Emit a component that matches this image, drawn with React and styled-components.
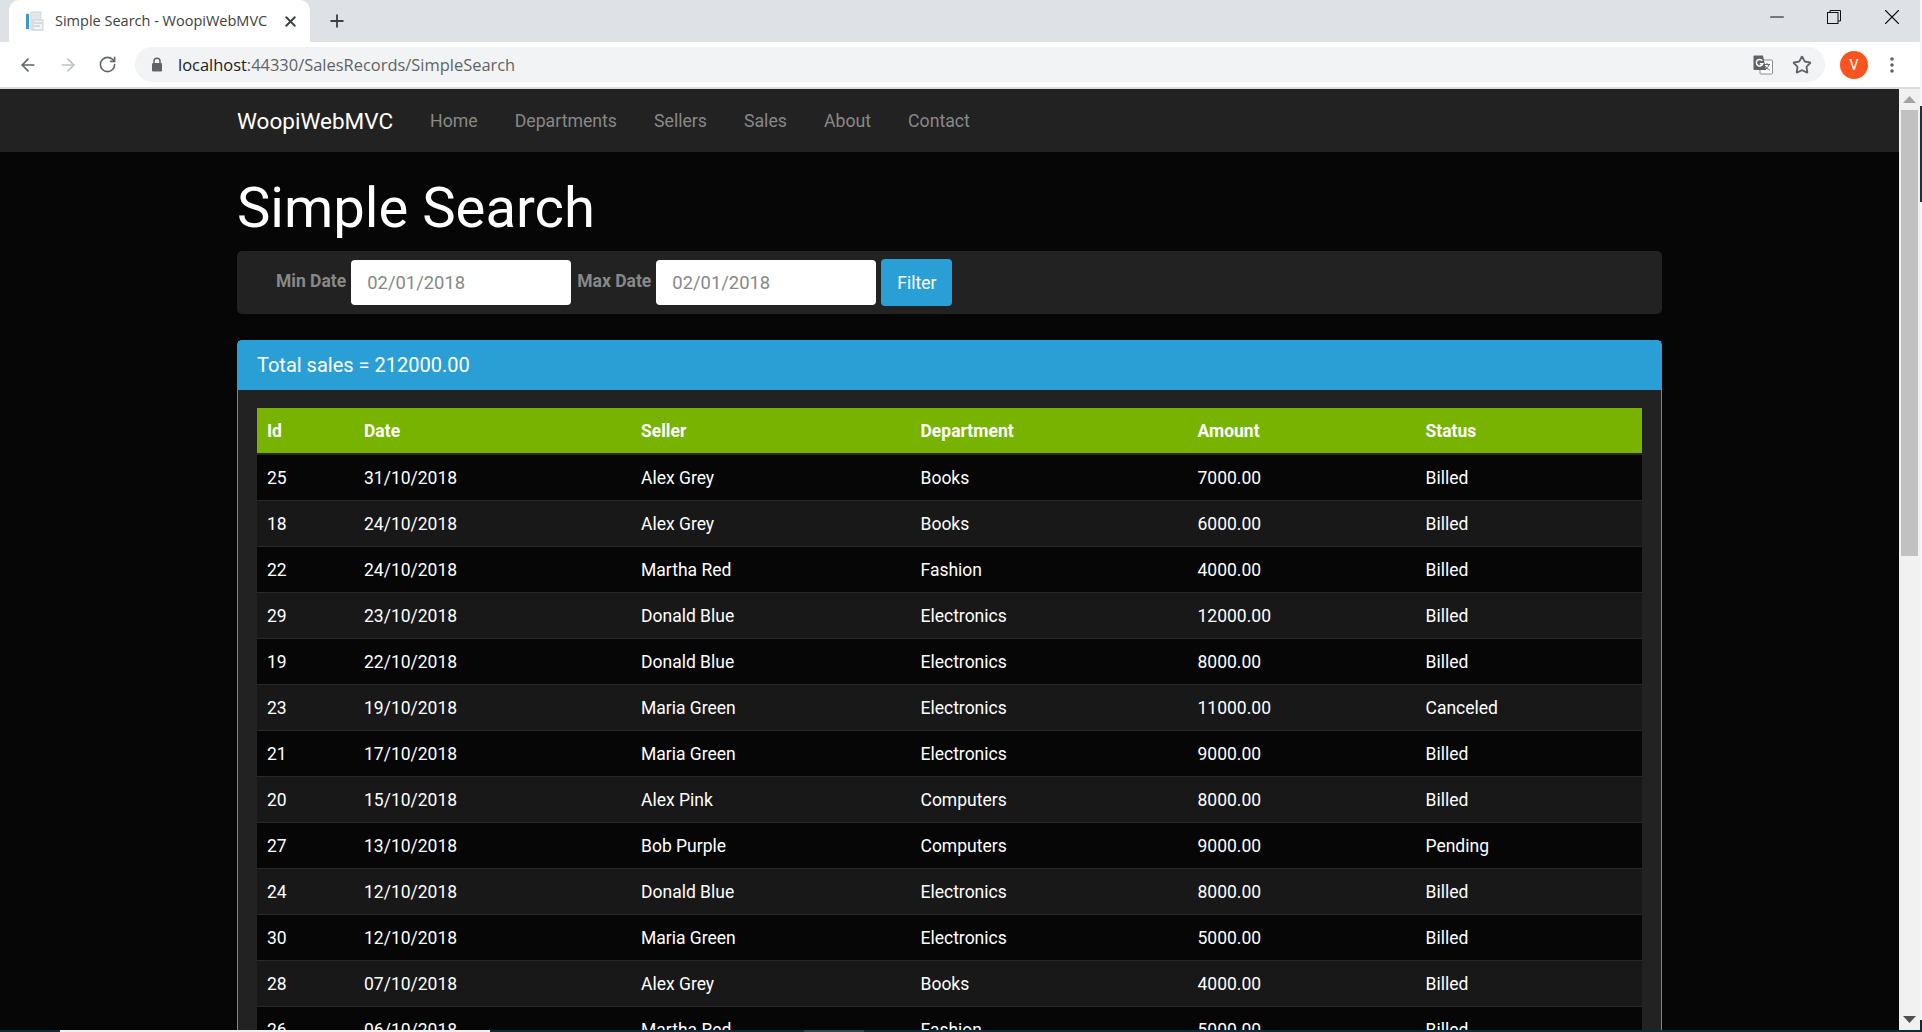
import React from "react";
import styled, { createGlobalStyle } from "styled-components";
import { ArrowLeft, ArrowRight, RotateCw, Star, Plus, X, Minus } from "lucide-react";

const Global = createGlobalStyle`
  html, body { margin: 0; padding: 0; background: #060606; overflow: hidden; }
  * { box-sizing: border-box; }
`;

const Screen = styled.div`
  width: 1922px; height: 1032px; display: flex; flex-direction: column; overflow: hidden;
  font-family: Roboto, "Liberation Sans", sans-serif;
`;
const WindowRow = styled.div`display: flex; height: 1030px;`;
const Browser = styled.div`width: 1920px; display: flex; flex-direction: column;`;
const EdgeStrip = styled.div`
  width: 2px; display: flex; flex-direction: column; background: #f4f5f6;
`;
const EdgeSeg = styled.div`
  height: ${p => p.$h}px; background: ${p => p.$c};
`;
const Taskbar = styled.div`height: 2px; display: flex; background: #0b2a3a;`;
const TaskSeg = styled.div`
  width: ${p => p.$w}px; background: ${p => p.$c};
`;

const TabStrip = styled.div`
  height: 42px; background: #dee1e6; display: flex; align-items: flex-end; padding-left: 9px;
`;
const Tab = styled.div`
  width: 301px; height: 42px; background: #fff; border-radius: 10px 10px 0 0;
  display: flex; align-items: center; padding-left: 16px; position: relative;
  font-family: "Open Sans", "Noto Sans", sans-serif; font-size: 14.5px; color: #3c4043;
`;
const TabTitle = styled.span`margin-left: 10px; width: 227px; white-space: nowrap; position: relative; top: -1px;`;
const TabClose = styled.span`display: flex; color: #3c4043;`;
const NewTab = styled.span`display: flex; margin-left: 17px; height: 42px; align-items: center; color: #3c4043;`;
const Spring = styled.div`flex: 1;`;
const WinButton = styled.span`
  width: ${p => p.$w}px; height: 34px; display: flex; align-items: center; justify-content: center;
  align-self: flex-start; color: #111;
`;

const Toolbar = styled.div`
  height: 47px; background: #fff; border-bottom: 2px solid #dadce0; display: flex; align-items: center;
  padding-left: 18px;
`;
const NavIcon = styled.span`
  display: flex; width: ${p => p.$w}px; color: ${p => p.$c};
`;
const AddressBar = styled.div`
  width: 1690px; height: 35px; margin-left: 1px; background: #f1f3f4; border-radius: 18px;
  display: flex; align-items: center; padding-left: 16px;
  font-family: "Open Sans", "Noto Sans", sans-serif; font-size: 16.45px; color: #5f6368;
`;
const LockWrap = styled.span`display: flex; width: 27px;`;
const Host = styled.span`color: #202124;`;
const Avatar = styled.span`
  width: 28px; height: 28px; border-radius: 50%; background: #fb541e; color: #fff; margin-left: 15px;
  display: flex; align-items: center; justify-content: center; font-size: 14px;
`;
const AddrIcons = styled.span`
  margin-left: auto; display: flex; align-items: center; gap: 19px; padding-right: 13px; color: #5f6368;
`;
const Kebab = styled.span`display: flex; margin-left: 22px;`;

const Viewport = styled.div`flex: 1; display: flex; min-height: 0;`;
const Page = styled.div`
  flex: 1; min-width: 0; background: #060606; overflow: hidden; color: #fff;
`;
const Scrollbar = styled.div`
  width: 21px; background: #f1f1f1; display: flex; flex-direction: column; align-items: center;
`;
const ScrollArrow = styled.div`
  height: 21px; width: 100%; display: flex; align-items: center; justify-content: center;
`;
const Thumb = styled.div`width: 17px; height: 446px; background: #c1c1c1;`;
const ScrollTrack = styled.div`flex: 1;`;

const Navbar = styled.nav`height: 63px; background: #222; display: flex; justify-content: center;`;
const Container = styled.div`width: 1425px;`;
const NavInner = styled(Container)`display: flex; align-items: center;`;
const Brand = styled.span`font-size: 22.5px; color: #fff; margin-right: 37px;`;
const NavLink = styled.span`font-size: 17.7px; color: #888; margin-right: 37px;`;

const Main = styled.main`display: flex; justify-content: center;`;
const Title = styled.h1`
  font-weight: 400; font-size: 56.2px; line-height: 62px; margin: 0; padding-top: 25px; height: 99px; color: #fff;
`;
const FilterBar = styled.form`
  height: 63px; margin: 0 0 26px; background: #222; border-radius: 5px; display: flex; align-items: center;
  padding-left: 39px;
`;
const FilterLabel = styled.label`
  font-weight: 700; font-size: 17.5px; color: #888; margin-right: 5px; margin-left: ${p => p.$ml || 0}px;
  position: relative; top: -2px;
`;
const DateInput = styled.input`
  width: 220px; height: 45px; border: 0; border-radius: 4px; background: #fff; color: #888;
  font: 400 18.4px Roboto, sans-serif; padding: 0 16px;
  &::placeholder { color: #888; opacity: 1; }
`;
const FilterButton = styled.button`
  width: 71px; height: 47px; margin-left: 5px; border: 0; border-radius: 4px; background: #2a9fd6; color: #fff;
  font: 400 17.5px Roboto, sans-serif;
`;
const Panel = styled.section`
  border: 1px solid #2a9fd6; border-bottom: 0; border-radius: 5px 5px 0 0; background: #222;
`;
const PanelHeading = styled.div`
  height: 49px; margin: 0 0 0; background: #2a9fd6; color: #fff; font-size: 20px; display: flex; align-items: center;
  padding: 0 0 1px 19px;
`;
const PanelBody = styled.div`padding: 18px 19px 0;`;
const Table = styled.table`
  width: 1385px; table-layout: fixed; border-collapse: separate; border-spacing: 0; font-size: 17.5px; color: #fff;
`;
const Col = styled.col`width: ${p => p.$w}px;`;
const HeadRow = styled.tr`height: 47px;`;
const Th = styled.th`
  text-align: left; font-weight: 700; padding: 0 10px; background: #77b300; border-bottom: 2px solid #282828;
`;
const Row = styled.tr`
  height: 46px; background: ${p => (p.$odd ? "#060606" : "#181818")};
`;
const Td = styled.td`padding: 1px 10px 0; border-bottom: 1px solid #282828;`;

const cols = [97, 277, 279.5, 277, 228, 226.5];
const heads = ["Id", "Date", "Seller", "Department", "Amount", "Status"];
const rows = [
  ["25", "31/10/2018", "Alex Grey", "Books", "7000.00", "Billed"],
  ["18", "24/10/2018", "Alex Grey", "Books", "6000.00", "Billed"],
  ["22", "24/10/2018", "Martha Red", "Fashion", "4000.00", "Billed"],
  ["29", "23/10/2018", "Donald Blue", "Electronics", "12000.00", "Billed"],
  ["19", "22/10/2018", "Donald Blue", "Electronics", "8000.00", "Billed"],
  ["23", "19/10/2018", "Maria Green", "Electronics", "11000.00", "Canceled"],
  ["21", "17/10/2018", "Maria Green", "Electronics", "9000.00", "Billed"],
  ["20", "15/10/2018", "Alex Pink", "Computers", "8000.00", "Billed"],
  ["27", "13/10/2018", "Bob Purple", "Computers", "9000.00", "Pending"],
  ["24", "12/10/2018", "Donald Blue", "Electronics", "8000.00", "Billed"],
  ["30", "12/10/2018", "Maria Green", "Electronics", "5000.00", "Billed"],
  ["28", "07/10/2018", "Alex Grey", "Books", "4000.00", "Billed"],
  ["26", "06/10/2018", "Martha Red", "Fashion", "5000.00", "Billed"],
];

const Favicon = () => (
  <svg width="20" height="20" viewBox="0 0 20 20">
    <rect x="1" y="2" width="11" height="17" fill="#eef1f5" />
    <rect x="1" y="3" width="3" height="15" fill="#3d96d6" />
    <rect x="6" y="1" width="10" height="18" fill="#e3e7ec" stroke="#d3d8de" />
    <rect x="8" y="9" width="10" height="10" fill="#f2f4f7" stroke="#c9ced5" />
    <path d="M9 12h8M9 15h6" stroke="#b9bfc7" />
  </svg>
);
const Lock = () => (
  <svg width="12" height="15" viewBox="0 0 12 15">
    <path d="M3 6V4.2a3 3 0 0 1 6 0V6" fill="none" stroke="#5f6368" strokeWidth="1.5" />
    <rect x="1" y="6" width="10" height="8.5" rx="1.2" fill="#5f6368" />
  </svg>
);
const Translate = () => (
  <svg width="20" height="20" viewBox="0 0 20 20">
    <rect x="7" y="5" width="12.5" height="14" rx="1" fill="#fff" stroke="#8a8d91" />
    <path d="M11 9.5h6M14 8v1.5M16 9.5c-.6 2.4-2.4 4.4-4.6 5.4M12.4 11c.8 1.8 2.4 3.2 4.4 4" fill="none" stroke="#6a6d71" strokeWidth="1" />
    <path d="M1.5 0.5H10L13 15H1.5a1 1 0 0 1-1-1V1.5a1 1 0 0 1 1-1z" fill="#5f6368" />
    <path d="M9.3 5.7a3.3 3.3 0 1 0 .5 3H6.8" fill="none" stroke="#fff" strokeWidth="1.5" />
  </svg>
);
const Restore = () => (
  <svg width="14" height="14" viewBox="0 0 14 14" fill="none" stroke="#111" strokeWidth="1">
    <rect x="0.5" y="2.5" width="10.5" height="11" />
    <path d="M3 2.5V.5h10.5v10.5H11" />
  </svg>
);
const Dots = () => (
  <svg width="4" height="16" viewBox="0 0 4 16" fill="#5f6368">
    <circle cx="2" cy="2" r="1.8" /><circle cx="2" cy="8" r="1.8" /><circle cx="2" cy="14" r="1.8" />
  </svg>
);
const Tri = ({ up, c }) => (
  <svg width="13" height="7" viewBox="0 0 13 7">
    <path d={up ? "M6.5 0L13 7H0z" : "M0 0h13L6.5 7z"} fill={c} />
  </svg>
);

export default function App() {
  return (
    <Screen>
      <Global />
      <WindowRow>
        <Browser>
          <TabStrip>
            <Tab>
              <Favicon />
              <TabTitle>Simple Search - WoopiWebMVC</TabTitle>
              <TabClose><X size={17} strokeWidth={2.8} /></TabClose>
            </Tab>
            <NewTab><Plus size={20} strokeWidth={2.2} /></NewTab>
            <Spring />
            <WinButton $w={56}><Minus size={22} strokeWidth={1.1} /></WinButton>
            <WinButton $w={58}><Restore /></WinButton>
            <WinButton $w={57}><X size={26} strokeWidth={1} /></WinButton>
          </TabStrip>
          <Toolbar>
            <NavIcon $w={40} $c="#5f6368"><ArrowLeft size={20} strokeWidth={2} /></NavIcon>
            <NavIcon $w={40} $c="#bdc1c6"><ArrowRight size={20} strokeWidth={2} /></NavIcon>
            <NavIcon $w={36} $c="#5f6368"><RotateCw size={19} strokeWidth={2} /></NavIcon>
            <AddressBar>
              <LockWrap><Lock /></LockWrap>
              <Host>localhost</Host>:44330/SalesRecords/SimpleSearch
              <AddrIcons><Translate /><Star size={20} strokeWidth={2.2} /></AddrIcons>
            </AddressBar>
            <Avatar>V</Avatar>
            <Kebab><Dots /></Kebab>
          </Toolbar>
          <Viewport>
            <Page>
              <Navbar>
                <NavInner>
                  <Brand>WoopiWebMVC</Brand>
                  <NavLink>Home</NavLink>
                  <NavLink>Departments</NavLink>
                  <NavLink>Sellers</NavLink>
                  <NavLink>Sales</NavLink>
                  <NavLink>About</NavLink>
                  <NavLink>Contact</NavLink>
                </NavInner>
              </Navbar>
              <Main>
                <Container>
                  <Title>Simple Search</Title>
                  <FilterBar>
                    <FilterLabel>Min Date</FilterLabel>
                    <DateInput readOnly value="02/01/2018" />
                    <FilterLabel $ml={6}>Max Date</FilterLabel>
                    <DateInput readOnly value="02/01/2018" />
                    <FilterButton type="button">Filter</FilterButton>
                  </FilterBar>
                  <Panel>
                    <PanelHeading>Total sales = 212000.00</PanelHeading>
                    <PanelBody>
                      <Table>
                        <colgroup>{cols.map((w, i) => <Col key={i} $w={w} />)}</colgroup>
                        <thead>
                          <HeadRow>{heads.map(h => <Th key={h}>{h}</Th>)}</HeadRow>
                        </thead>
                        <tbody>
                          {rows.map((r, i) => (
                            <Row key={r[0]} $odd={i % 2 === 0}>
                              {r.map((c, j) => <Td key={j}>{c}</Td>)}
                            </Row>
                          ))}
                        </tbody>
                      </Table>
                    </PanelBody>
                  </Panel>
                </Container>
              </Main>
            </Page>
            <Scrollbar>
              <ScrollArrow><Tri up c="#a3a3a3" /></ScrollArrow>
              <Thumb />
              <ScrollTrack />
              <ScrollArrow><Tri c="#505050" /></ScrollArrow>
            </Scrollbar>
          </Viewport>
        </Browser>
        <EdgeStrip>
          <EdgeSeg $h={106} $c="#f4f5f6" />
          <EdgeSeg $h={96} $c="#1d2f3a" />
          <EdgeSeg $h={818} $c="#f4f5f6" />
          <EdgeSeg $h={10} $c="#0b2a3a" />
        </EdgeStrip>
      </WindowRow>
      <Taskbar>
        <TaskSeg $w={60} $c="#0b2a3a" />
        <TaskSeg $w={430} $c="#f0f0f0" />
        <TaskSeg $w={314} $c="#0b2a3a" />
        <TaskSeg $w={60} $c="#2d4a5a" />
      </Taskbar>
    </Screen>
  );
}
